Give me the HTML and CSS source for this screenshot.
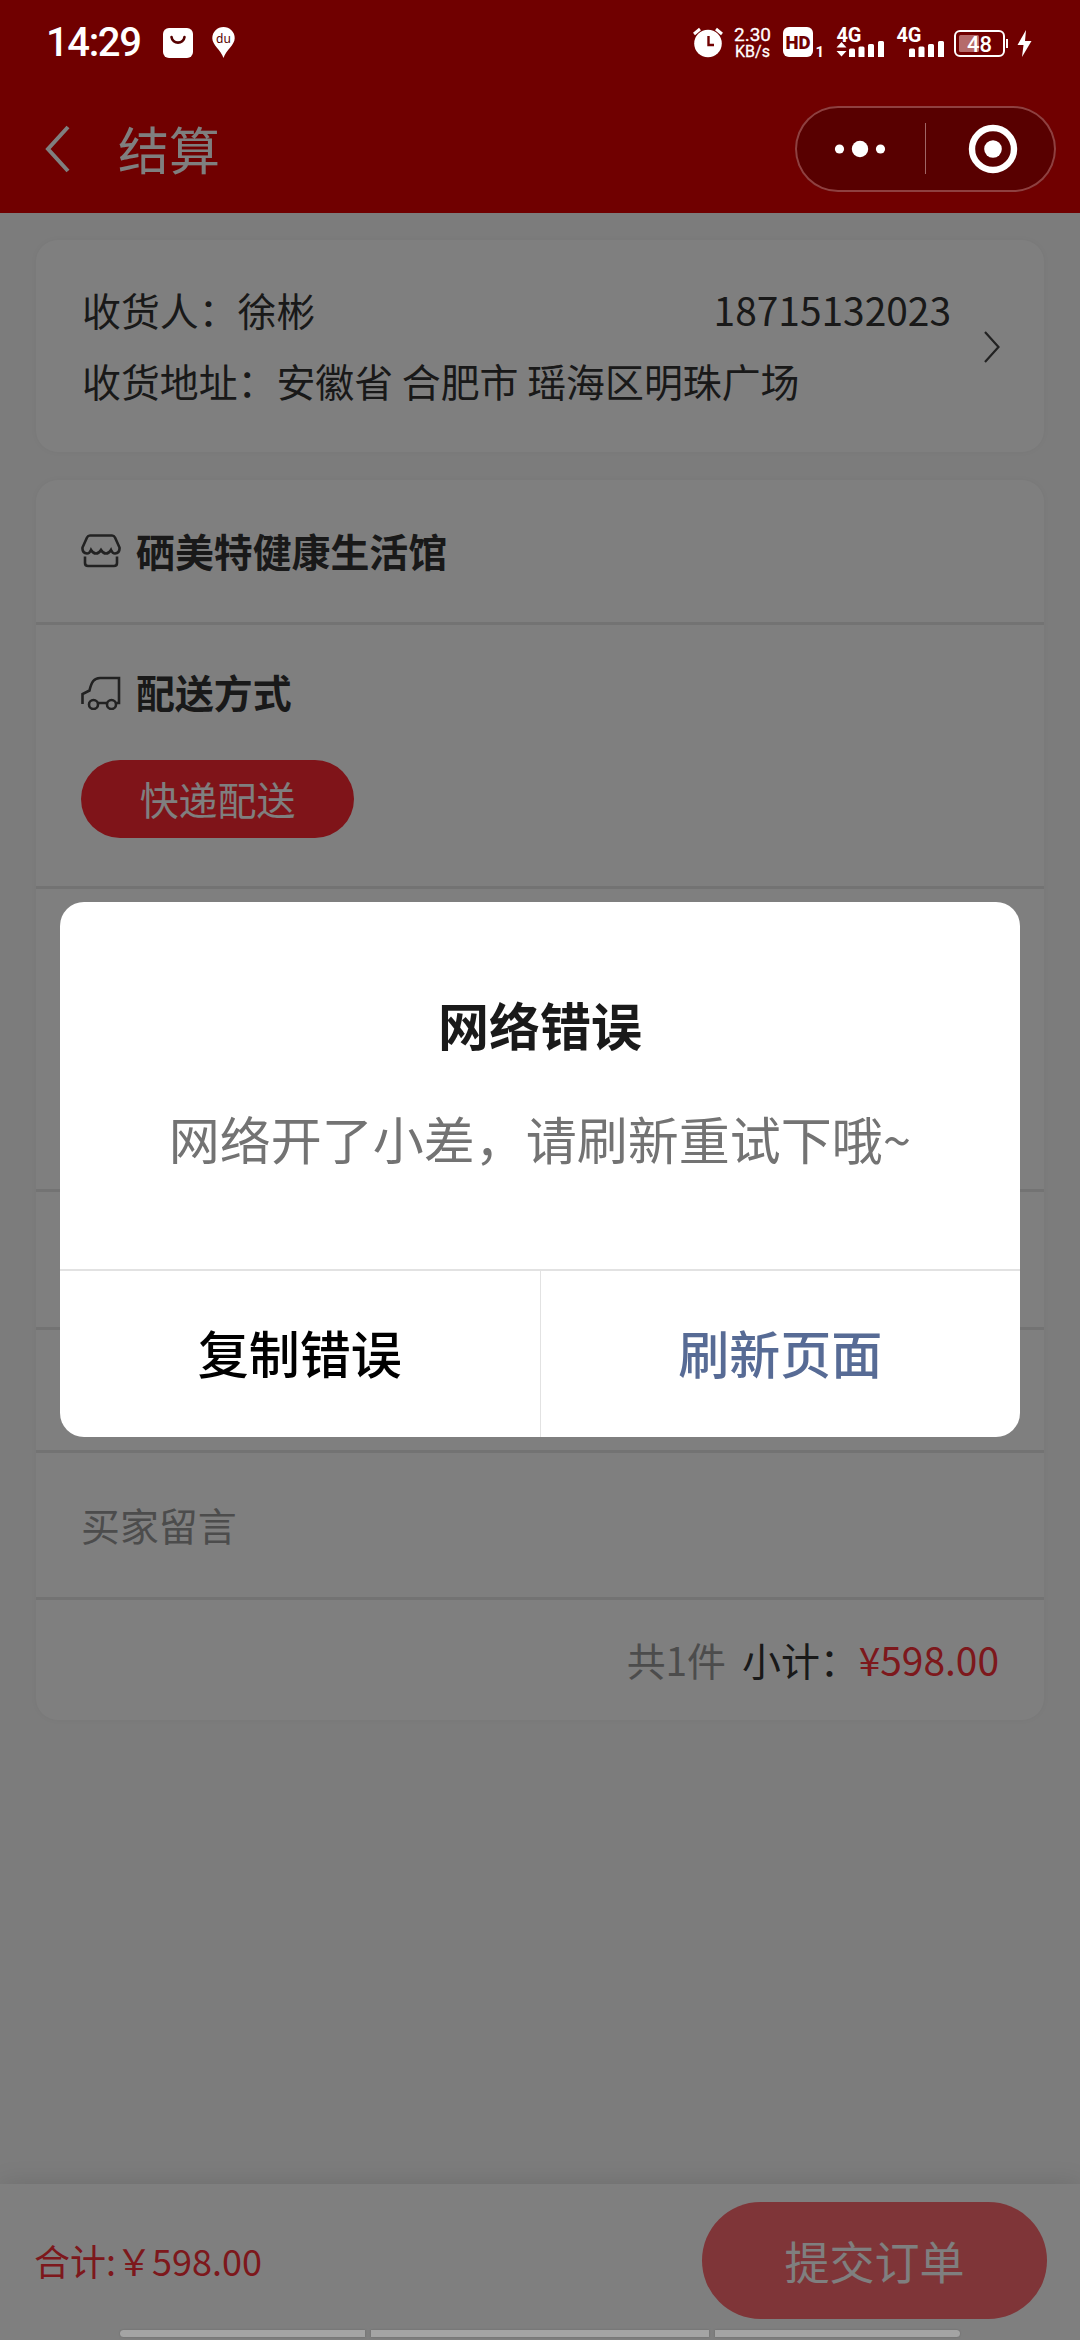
FILE: index.html
```html
<!DOCTYPE html>
<html lang="zh-CN">

<head>
    <meta charset="UTF-8">
    <meta name="viewport" content="width=device-width, initial-scale=1.0">
    <title>结算</title>
    <link rel="stylesheet" href="styles.css">
</head>

<body>

    <div class="page">
        <header class="header">
            <div class="status">
                <span class="clock">14:29</span>
                <svg class="bag" width="30" height="30" viewBox="0 0 30 30">
                    <rect width="30" height="30" rx="6" fill="#fff"></rect>
                    <path d="M8.500 9c1 7.500 12 7.500 13 0" fill="none" stroke="#500" stroke-width="2.600" stroke-linecap="round"></path>
                </svg>
                <svg class="pin" width="23" height="31" viewBox="0 0 23 31">
                    <path d="M11.500 0A11.200 11.200 0 0 1 22.700 11.200C22.700 18 14 23 11.500 31C9 23 .3 18 .3 11.200A11.200 11.200 0 0 1 11.500 0z" fill="#fff"></path>
                    <text x="11.500" y="15.500" text-anchor="middle" class="pin-text">du</text>
                </svg>
                <svg class="system" width="345" height="55" viewBox="690 15 345 55" fill="#fff">
                    <!-- alarm -->
                    <circle cx="708" cy="43.500" r="13.800"></circle>
                    <path d="M694 34l6-5M722 34l-6-5" stroke="#fff" stroke-width="3"></path>
                    <path d="M708.500 36v9h5.500" fill="none" stroke="#700000" stroke-width="2.400"></path>
                    <!-- speed -->
                    <text x="734" y="41" class="speed" textLength="37">2.30</text>
                    <text x="735" y="57" class="speed unit" textLength="35">KB/s</text>
                    <!-- hd -->
                    <rect x="783" y="27" width="30" height="30" rx="6"></rect>
                    <text x="785.500" y="48.500" class="hd" textLength="25" lengthAdjust="spacingAndGlyphs">HD</text>
                    <text x="815.500" y="56.500" class="sim">1</text>
                    <!-- signals -->
                    <text x="836.500" y="41.500" class="net" textLength="25">4G</text>
                    <path d="M841.500 42l5 5.500h-10zM841.500 56.500l5-5.500h-10z"></path>
                    <path d="M849 50q0-1.500 1.500-1.500h3q1.500 0 1.500 1.500v7h-6zM858.500 48q0-1.500 1.500-1.500h3q1.500 0 1.500 1.500v9h-6zM868 45.500q0-1.500 1.500-1.500h3q1.500 0 1.500 1.500v11.500h-6zM878 42.500q0-1.500 1.500-1.500h3q1.500 0 1.500 1.500v14.500h-6z"></path>
                    <text x="896.500" y="41.500" class="net" textLength="25">4G</text>
                    <path d="M909 50q0-1.500 1.500-1.500h3q1.500 0 1.500 1.500v7h-6zM918.500 48q0-1.500 1.500-1.500h3q1.500 0 1.500 1.500v9h-6zM928 45.500q0-1.500 1.500-1.500h3q1.500 0 1.500 1.500v11.500h-6zM938 42.500q0-1.500 1.500-1.500h3q1.500 0 1.500 1.500v14.500h-6z"></path>
                    <!-- battery -->
                    <rect x="955" y="31" width="49" height="25" rx="5" fill="none" stroke="#fff" stroke-width="2"></rect>
                    <rect x="959" y="35" width="20" height="17" rx="1.500" fill="#b56b6b"></rect>
                    <rect x="1006" y="39" width="2" height="9"></rect>
                    <text x="979.500" y="51.500" class="battery" text-anchor="middle">48</text>
                    <path d="M1026 30L1017.500 45h6l-1.500 12L1031.500 41h-6.500z"></path>
                </svg>
            </div>
            <div class="navbar">
                <svg class="back" width="26" height="48" viewBox="0 0 26 48">
                    <path d="M23 2L3 24L23 46" fill="none" stroke="#fff" stroke-width="4"></path>
                </svg>
                <h1 class="title">结算</h1>
                <div class="capsule">
                    <svg width="261" height="86" viewBox="0 0 261 86" fill="#fff">
                        <circle cx="44.500" cy="43" r="4.600"></circle>
                        <circle cx="65" cy="43" r="8.200"></circle>
                        <circle cx="85.500" cy="43" r="4.600"></circle>
                        <rect x="130" y="17" width="1" height="51" fill="#a06666"></rect>
                        <circle cx="198" cy="43" r="21" fill="none" stroke="#fff" stroke-width="6.400"></circle>
                        <circle cx="198" cy="43" r="8.800"></circle>
                    </svg>
                </div>
            </div>
        </header>

        <main class="content">
            <section class="card address">
                <div class="address-info">
                    <div class="address-row">
                        <span>收货人：徐彬</span>
                        <span>18715132023</span>
                    </div>
                    <div class="address-row">收货地址：安徽省 合肥市 瑶海区明珠广场</div>
                </div>
                <svg class="arrow" width="18" height="32" viewBox="0 0 18 32">
                    <path d="M2 1L15.500 16L2 31" fill="none" stroke="#444" stroke-width="2.200"></path>
                </svg>
            </section>

            <section class="card order">
                <div class="row shop">
                    <svg width="40" height="36" viewBox="0 0 40 36" class="icon">
                        <path d="M9 2.500h22q2 0 3 2l4.500 10q.5 5.500-4.500 6-2.500 0-4-3.500-2 3.500-5 3.500t-5-3.500q-2 3.500-5 3.500t-5-3.500q-1.500 3.500-4 3.500-5-.5-4.500-6L6 4.500q1-2 3-2z"></path>
                        <path d="M4 23.500V30q0 3 3 3h26q3 0 3-3v-6.500"></path>
                    </svg>
                    <span>硒美特健康生活馆</span>
                </div>
                <div class="row delivery">
                    <div class="delivery-title">
                        <svg width="40" height="36" viewBox="0 0 40 36" class="icon">
                            <path d="M1.500 30V20l7-3.500C10.500 8 13 4 19 4h19v25h-2.500M17 29h9"></path>
                            <circle cx="12.500" cy="30.500" r="4.500"></circle>
                            <circle cx="30.500" cy="30.500" r="4.500"></circle>
                        </svg>
                        <span>配送方式</span>
                    </div>
                    <div class="delivery-tag">快递配送</div>
                </div>
                <div class="row goods"></div>
                <div class="row coupon"></div>
                <div class="row freight"></div>
                <div class="row remark">买家留言</div>
                <div class="row subtotal">
                    <span class="count">共1件</span>
                    <span class="label">小计：</span>
                    <span class="price">¥598.00</span>
                </div>
            </section>
        </main>

        <footer class="footer">
            <span class="total">合计:￥598.00</span>
            <div class="submit">提交订单</div>
        </footer>

        <div class="mask">
            <div class="dialog">
                <div class="dialog-body">
                    <h2 class="dialog-title">网络错误</h2>
                    <p class="dialog-text">网络开了小差，请刷新重试下哦~</p>
                </div>
                <div class="dialog-actions">
                    <div class="action">复制错误</div>
                    <div class="action primary">刷新页面</div>
                </div>
            </div>
        </div>

        <div class="gesture">
            <i></i>
            <i></i>
            <i></i>
        </div>
    </div>

</body>

</html>
```
FILE: styles.css
```css
* {
    box-sizing: border-box;
    margin: 0;
    padding: 0;
}

body {
    width: 1080px;
    height: 2340px;
    overflow: hidden;
    font-family: "Noto Sans CJK SC", sans-serif;
    color: #333;
}

svg {
    display: block;
    flex: none;
}

.page {
    position: relative;
    width: 1080px;
    height: 2340px;
    display: flex;
    flex-direction: column;
    background-color: #f8f8f8;
}

/* header */
.header {
    height: 213px;
    background-color: #e00000;
}

.status {
    position: relative;
    z-index: 2;
    height: 85px;
    padding: 0 45px 0 46px;
    display: flex;
    align-items: center;
    color: #fff;
}

.clock {
    width: 97px;
    font: 500 40px/1 Roboto, sans-serif;
    letter-spacing: -1.4px;
}

.bag {
    margin-left: 20px;
}

.pin {
    margin-left: 19px;
}

.pin-text {
    font: 12px "Noto Sans", sans-serif;
    fill: #500;
}

.system {
    margin-left: auto;
}

.speed {
    font: 400 19px Roboto, sans-serif;
    stroke: #fff;
    stroke-width: 0.3;
}

.unit {
    font-size: 16px;
}

.hd {
    font: 900 19px Roboto, sans-serif;
    fill: #700000;
}

.sim {
    font: 700 15px Roboto, sans-serif;
}

.net {
    font: 700 20px Roboto, sans-serif;
}

.battery {
    font: 500 22px Roboto, sans-serif;
}

.navbar {
    height: 128px;
    padding: 0 24px 0 45px;
    display: flex;
    align-items: center;
}

.title {
    margin: -3px 0 0 47px;
    font-size: 51px;
    font-weight: 400;
    line-height: 60px;
    color: #fff;
}

.capsule {
    position: relative;
    z-index: 2;
    width: 261px;
    height: 86px;
    margin-left: auto;
    border-radius: 43px;
    background-color: #580000;
    box-shadow: inset 0 0 0 2px #8f4040;
}

/* cards */
.content {
    flex: 1;
    padding: 27px 36px 0;
    display: flex;
    flex-direction: column;
    gap: 28px;
}

.card {
    border-radius: 22px;
    background-color: #fff;
    box-shadow: 0 0 6px rgba(0, 0, 0, 0.04);
}

.address {
    height: 212px;
    padding: 2px 43px 0 46px;
    display: flex;
    align-items: center;
    justify-content: space-between;
    font-size: 38.9px;
}

.address-info {
    width: 869px;
    margin-top: -5px;
}

.address-row {
    display: flex;
    justify-content: space-between;
    line-height: 71px;
}

.row {
    border-bottom: 3px solid #e6e6e6;
    padding: 0 45px;
    font-size: 38.9px;
}

.icon {
    fill: none;
    stroke: #444;
    stroke-width: 2.6;
}

.shop {
    height: 145px;
    display: flex;
    align-items: center;
    gap: 15px;
    font-weight: 700;
}

.shop span,
.delivery-title span {
    margin-top: -3px;
}

.delivery {
    height: 264px;
    padding-top: 37px;
}

.delivery-title {
    height: 60px;
    display: flex;
    align-items: center;
    gap: 15px;
    font-weight: 700;
}

.delivery-tag {
    width: 273px;
    height: 78px;
    margin-top: 38px;
    border-radius: 39px;
    background-color: #ff2833;
    color: #fff;
    line-height: 77px;
    text-align: center;
}

.goods {
    height: 303px;
}

.coupon {
    height: 138px;
}

.freight {
    height: 123px;
}

.remark {
    height: 147px;
    line-height: 143px;
    color: #999;
}

.subtotal {
    height: 120px;
    padding-bottom: 3px;
    border-bottom: 0;
    display: flex;
    align-items: center;
    justify-content: flex-end;
}

.count {
    color: #999;
    margin-right: 16px;
}

.price {
    color: #fa3038;
}

/* footer */
.footer {
    height: 156px;
    padding: 18px 33px 0 34px;
    display: flex;
    justify-content: space-between;
    background-color: #fff;
    box-shadow: 0 0 24px rgba(0, 0, 0, 0.12);
}

.total {
    font-size: 36px;
    line-height: 117px;
    color: #fa3038;
}

.submit {
    width: 345px;
    height: 117px;
    border-radius: 59px;
    background-color: #ff6a70;
    color: #fff;
    font-size: 45px;
    line-height: 118px;
    text-align: center;
}

/* dialog */
.mask {
    position: absolute;
    inset: 0;
    z-index: 1;
    padding-bottom: 1px;
    background-color: rgba(0, 0, 0, 0.5);
    display: flex;
    justify-content: center;
    align-items: center;
}

.dialog {
    width: 960px;
    height: 535px;
    border-radius: 24px;
    background-color: #fff;
    overflow: hidden;
    text-align: center;
}

.dialog-body {
    height: 367px;
    padding-top: 84px;
}

.dialog-title {
    font-size: 51px;
    font-weight: 700;
    line-height: 76px;
    color: #1a1a1a;
}

.dialog-text {
    margin-top: 38px;
    font-size: 51px;
    line-height: 76px;
    color: #737373;
}

.dialog-actions {
    height: 168px;
    display: flex;
    border-top: 2px solid #e2e2e2;
}

.action {
    flex: 1;
    font-size: 51px;
    font-weight: 500;
    line-height: 163px;
    color: #000;
}

.primary {
    border-left: 1px solid #e2e2e2;
    color: #576b95;
}

/* gesture hints of the system, above the mask */
.gesture {
    position: absolute;
    z-index: 2;
    left: 120px;
    bottom: 3px;
    width: 840px;
    display: flex;
    gap: 6px;
}

.gesture i {
    width: 245px;
    height: 7px;
    background-color: #a4a4a4;
    box-shadow: 0 0 2px #666;
}

.gesture i:nth-child(2) {
    flex: 1;
}

.gesture i:first-child {
    border-radius: 4px 0 0 4px;
}

.gesture i:last-child {
    border-radius: 0 4px 4px 0;
}
```
